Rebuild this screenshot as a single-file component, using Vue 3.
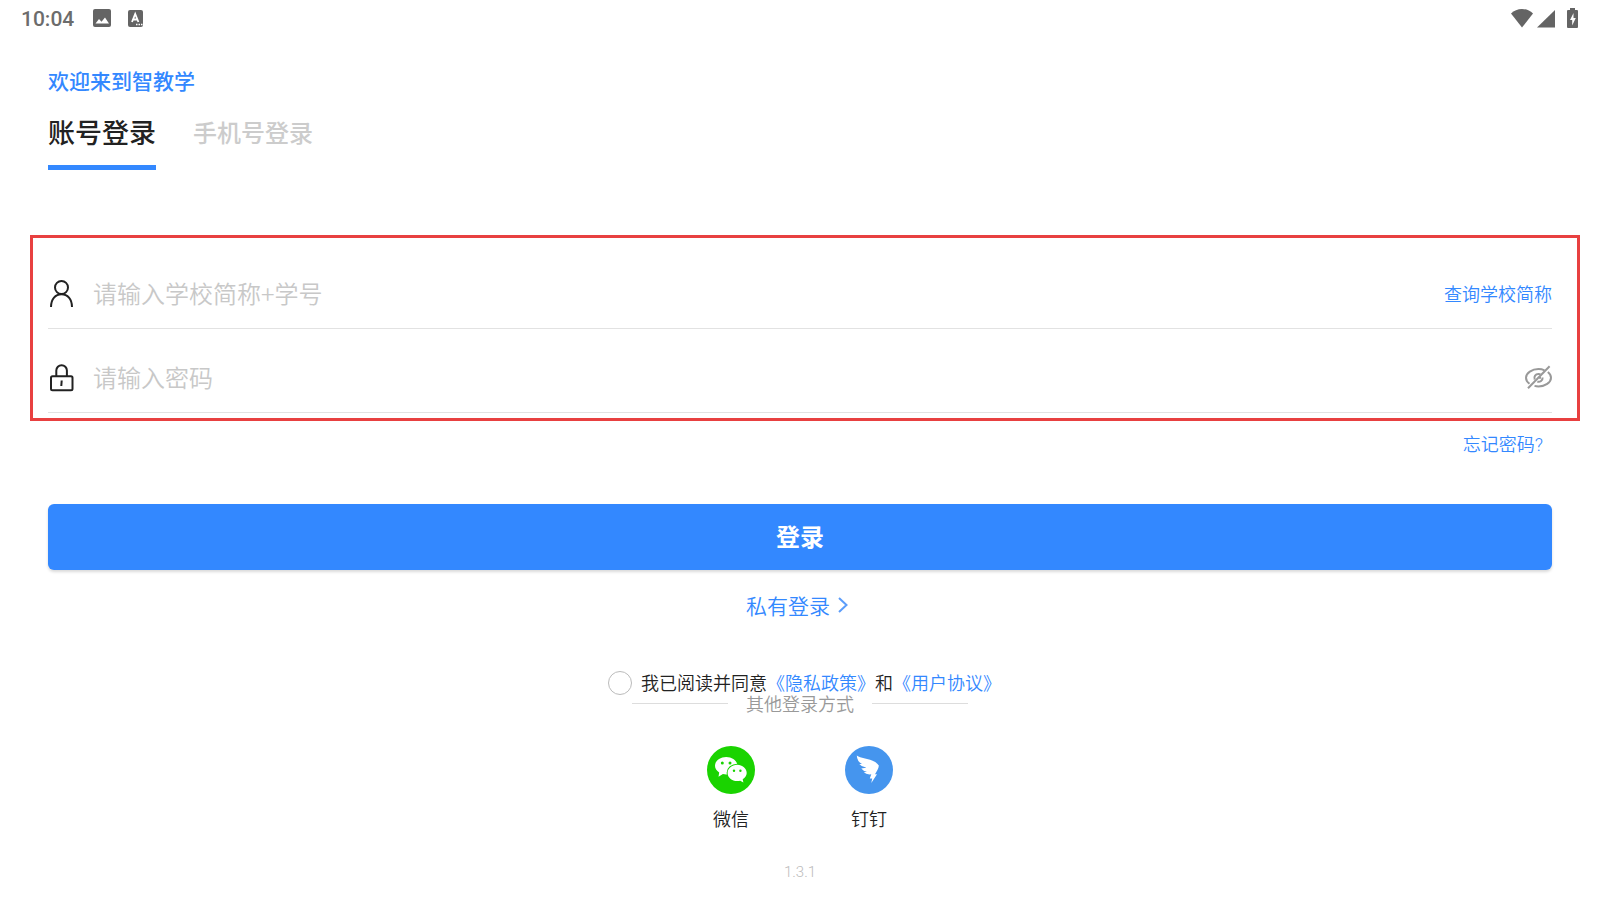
<script setup>
import { ref } from 'vue'

const tabs = ['账号登录', '手机号登录']
const activeTab = ref(0)
const account = ref('')
const password = ref('')
const agreed = ref(false)
</script>

<template>
  <div class="screen">
    <header class="status">
      <span class="clock">10:04</span>
      <svg class="status-image" width="18" height="18" viewBox="0 0 18 18">
        <rect width="18" height="18" rx="2" fill="#646464" />
        <path d="M2.500 14.500l3.500-4.500 2.500 2.800L12 8.500l4 6z" fill="#fff" />
      </svg>
      <svg class="status-key" width="15" height="17" viewBox="0 0 15 17">
        <rect width="15" height="17" rx="2" fill="#646464" />
        <path d="M4 12L7.200 4 10.400 12M5 9.500h4.400" fill="none" stroke="#fff" stroke-width="1.800" />
        <path d="M8 14.500h1.500M10.500 14.500h1.500M13 14.500h1.500" stroke="#fff" stroke-width="1.300" />
      </svg>
      <div class="signals">
        <svg width="22" height="20" viewBox="0 0 22 20">
          <path d="M11 19.500L0 5.500Q4.500 1 11 1T22 5.500z" fill="#646464" />
        </svg>
        <svg class="cell" width="18" height="20" viewBox="0 0 18 20">
          <path d="M18 2v17.500H0z" fill="#646464" />
        </svg>
        <svg class="battery" width="11" height="20" viewBox="0 0 11 20">
          <path d="M3 2V0h5v2h2q1 0 1 1v16q0 1-1 1H1q-1 0-1-1V3q0-1 1-1z" fill="#646464" />
          <path d="M6.500 5L3 12h2.200v5.500L8.800 10H6.500z" fill="#fff" />
        </svg>
      </div>
    </header>

    <main>
      <h1 class="welcome">欢迎来到智教学</h1>
      <nav class="tabs">
        <button
          v-for="(tab, i) in tabs"
          :key="tab"
          type="button"
          class="tab"
          :class="{ active: i === activeTab }"
          @click="activeTab = i"
        >{{ tab }}</button>
      </nav>

      <form @submit.prevent>
        <div class="fields">
          <div class="field">
            <label for="account" aria-label="账号">
              <svg width="24" height="30" viewBox="0 0 24 30" fill="none" stroke="#222" stroke-width="2">
                <circle cx="11.500" cy="7.500" r="6.500" />
                <path d="M1 27C1 19 5.500 14.200 11.500 14.200S22 19 22 27" />
              </svg>
            </label>
            <input id="account" v-model="account" type="text" placeholder="请输入学校简称+学号" />
            <a href="#school">查询学校简称</a>
          </div>
          <div class="field">
            <label for="password" aria-label="密码">
              <svg width="24" height="30" viewBox="0 0 24 30" fill="none" stroke="#222" stroke-width="2">
                <rect x="1" y="12.200" width="21.500" height="14" rx="1.500" />
                <path d="M6.300 12V6.500a5.300 5.300 0 0 1 10.600 0V12M11.700 16.500L11.300 22" />
              </svg>
            </label>
            <input id="password" v-model="password" type="password" placeholder="请输入密码" />
            <button type="button" class="eye" aria-label="显示密码">
              <svg width="27" height="28" viewBox="0 0 27 28" fill="none" stroke="#999" stroke-width="2">
                <path d="M19.500 5.300Q16.800 4 13.500 4C7 4 1 8 1 12.700Q1 16.200 4.500 18.700M9.500 20.900Q11.300 21.400 13.500 21.400C20 21.400 26 17.500 26 12.700Q26 9.500 22.800 7" />
                <path d="M15.500 9.300Q14.500 8.800 13.500 8.900A4 4 0 0 0 9.700 14.500M12.300 16.600A4 4 0 0 0 17.600 12.500M14 12.700h2" />
                <path d="M24.600 1.300L3 23.300" />
              </svg>
            </button>
          </div>
        </div>
        <div class="forgot"><a href="#forgot">忘记密码?</a></div>
        <button type="submit" class="submit">登录</button>
      </form>

      <a href="#private" class="private">
        <span>私有登录</span>
        <svg width="10" height="16" viewBox="0 0 10 16" fill="none" stroke="#5c9dfa" stroke-width="2">
          <path d="M1 1l7.500 7L1 15" />
        </svg>
      </a>

      <div class="agreement">
        <input id="agree" v-model="agreed" type="checkbox" />
        <label for="agree">我已阅读并同意</label><a href="#privacy">《隐私政策》</a><span>和</span><a href="#terms">《用户协议》</a>
      </div>

      <div class="others">其他登录方式</div>

      <div class="providers">
        <button type="button">
          <svg width="48" height="48" viewBox="0 0 48 48">
            <circle cx="24" cy="24" r="24" fill="#1ad300" />
            <path d="M19.200 11C13 11 8 15 8 19.700c0 2.700 1.600 5 4.200 6.700L11.500 30.700l4.400-2.700q1.600.4 3.300.4c6.200 0 11.200-4 11.200-8.700S25.400 11 19.200 11z" fill="#fff" />
            <circle cx="15.300" cy="17" r="1.500" fill="#1ad300" />
            <circle cx="23" cy="17" r="1.500" fill="#1ad300" />
            <path d="M30.200 18.700c-5.300 0-9.600 3.700-9.600 8.200s4.300 8.200 9.600 8.200q1.600 0 3-.4l3.200 1.800-.7-3.300c2.400-1.500 4-3.700 4-6.300 0-4.500-4.200-8.200-9.500-8.200z" fill="#fff" stroke="#1ad300" stroke-width="2" paint-order="stroke" />
            <circle cx="27" cy="24.800" r="1.200" fill="#1ad300" />
            <circle cx="33.400" cy="24.800" r="1.200" fill="#1ad300" />
          </svg>
          <span>微信</span>
        </button>
        <button type="button">
          <svg width="48" height="48" viewBox="0 0 48 48">
            <circle cx="24" cy="24" r="24" fill="#4595ee" />
            <path d="M11.800 9.600C16 12.500 22 12.500 27 14.500Q32 16.500 33.800 19.500C34 22 31.500 25.500 30 28.300h2L26.300 37l.9-4.600h-2.400L26.300 28.300Q21.500 29 18.800 26.300L22 25.700Q18 25 16.300 22.500L21 21.800 21 21.400Q16.500 21 14.300 18L17 18Q12 15.500 11.800 9.600z" fill="#fff" />
          </svg>
          <span>钉钉</span>
        </button>
      </div>
    </main>
    <footer>1.3.1</footer>
  </div>
</template>

<style>
body { background: #fff; }
</style>

<style scoped>
* { box-sizing: border-box; }
.screen {
  min-height: 100vh;
  background: #fff;
  color: #222;
  font-family: Roboto, "Noto Sans CJK SC", sans-serif;
  font-size: 18px;
  line-height: 24px;
}
svg { display: block; }
a { color: #3388ff; text-decoration: none; }
button { padding: 0; border: 0; background: none; font: inherit; color: inherit; cursor: pointer; }
.status { display: flex; align-items: center; height: 36px; padding: 0 22px 0 21px; }
.clock { padding-top: 1px; font-size: 21px; font-weight: 500; color: #6c6c6c; }
.status-image { margin-left: 19px; }
.status-key { margin-left: 17px; }
.signals { display: flex; align-items: center; margin-left: auto; height: 34px; }
.cell { margin-left: 4px; }
.battery { margin-left: 12px; }
main { display: flex; flex-direction: column; padding: 0 48px; }
.welcome { margin: 31px 0 0; font-size: 21px; line-height: 30px; font-weight: 500; color: #3388ff; }
.tabs { display: flex; gap: 37px; margin-top: 13px; }
.tab { height: 60px; padding-bottom: 8px; border-bottom: 5px solid transparent; font-size: 24px; line-height: 40px; font-weight: 500; color: #ccc; }
.tab.active { border-color: #3388ff; font-size: 27px; color: #222; }
.fields { margin: 65px -28px 0 -18px; padding: 7px 25px 5px 15px; border: 3px solid #e84040; }
.field { display: flex; align-items: center; height: 68px; margin-top: 16px; padding-left: 2px; border-bottom: 1px solid #e2e2e2; }
.field input { flex: 1; min-width: 0; height: 40px; margin: 0 18px 0 19px; padding: 0; border: 0; outline: 0; background: none; font: inherit; font-size: 24px; font-weight: 350; color: #222; }
.field input::placeholder { color: #c8c8c8; opacity: 1; }
.forgot { display: flex; justify-content: flex-end; margin-top: 12px; padding-right: 9px; }
.submit { width: 100%; height: 66px; margin-top: 47px; padding-top: 2px; border-radius: 6px; background: #3388ff; box-shadow: 0 2px 3px rgba(0, 0, 0, 0.15); color: #fff; font-size: 24px; font-weight: 700; }
.private { display: flex; align-items: center; justify-content: center; gap: 8px; height: 30px; margin-top: 20px; padding-right: 6px; font-size: 21px; }
.private span { padding-top: 3px; }
.private, .agreement, .providers, .others, .field a, .forgot { font-weight: 350; }
.agreement label, .agreement a, .agreement span { padding-top: 2px; }
.agreement { display: flex; align-items: center; justify-content: center; height: 24px; margin-top: 51px; padding-left: 9px; white-space: nowrap; }
.agreement input { appearance: none; width: 24px; height: 24px; margin: 0 9px 0 0; border: 1px solid #bbb; border-radius: 50%; }
.agreement input:checked { background: #3388ff; }
.others { display: flex; justify-content: center; gap: 18px; line-height: 20px; color: #999; }
.others::before, .others::after { content: ""; width: 96px; height: 1px; margin-top: 8px; background: #ddd; }
.providers { display: flex; justify-content: center; gap: 90px; margin-top: 31px; }
.providers button { width: 48px; }
.providers span { display: block; margin-top: 14px; }
footer { margin-top: 28px; text-align: center; font-size: 15px; font-weight: 300; color: #bbb; }
</style>
